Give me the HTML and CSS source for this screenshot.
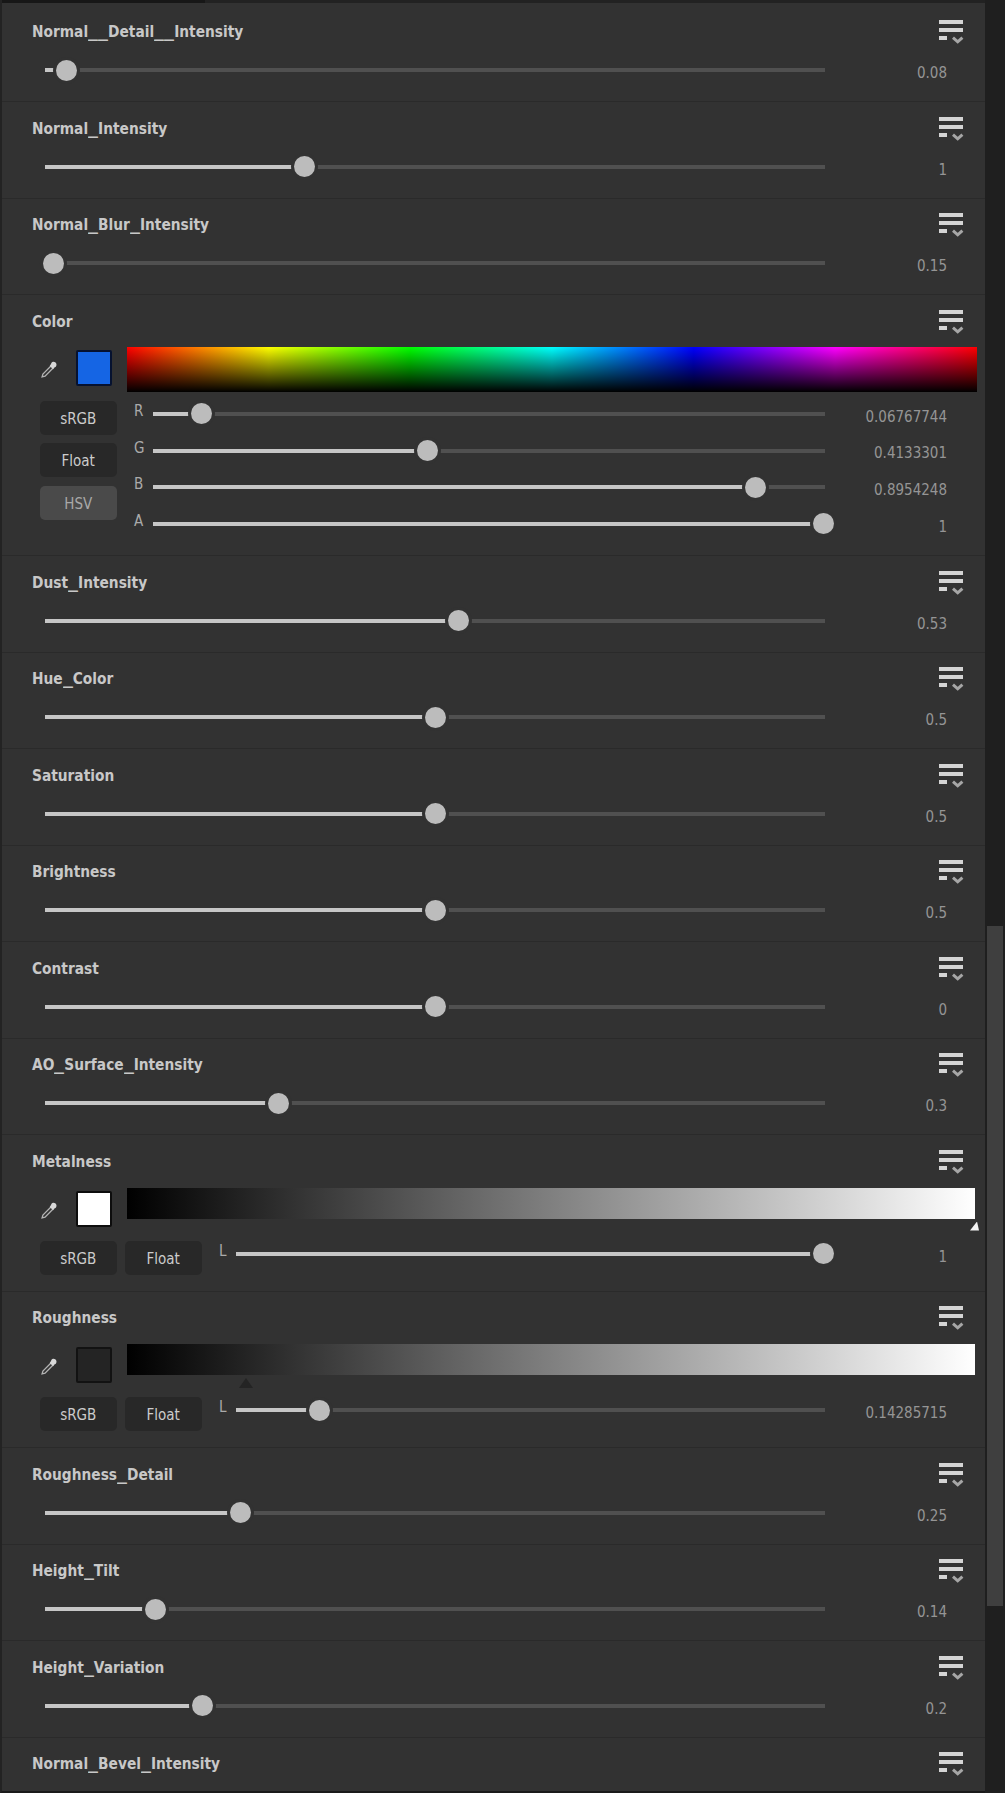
FILE: index.html
```html
<!DOCTYPE html>
<html lang="en">
<head>
<meta charset="utf-8">
<title>Material properties</title>
<link rel="stylesheet" href="styles.css">
</head>
<body>
<svg class="defs" width="0" height="0" aria-hidden="true">
  <symbol id="menu" viewBox="0 0 25 24">
    <rect x="0" y="0" width="24" height="4" fill="#d4d4d4"/>
    <rect x="0" y="8" width="24" height="4" fill="#d4d4d4"/>
    <rect x="0" y="16" width="8" height="4" fill="#d4d4d4"/>
    <path d="M14 17.6l4.7 4.2 4.7-4.2" fill="none" stroke="#a6a6a6" stroke-width="3"/>
  </symbol>
  <symbol id="dropper" viewBox="0 0 16 16">
    <path d="M9.6 4.4L1.8 12.2 1 15l2.8-.8 7.8-7.8" fill="none" stroke="#b4b4b4" stroke-width="1.2"/>
    <path d="M8.2 4.6l3.2 3.2 1-1.4 1.5-1c1.7-1.9.2-4.9-2.5-4.6-1.1.2-1.7 1-2 2.1z" fill="#d8d8d8"/>
  </symbol>
</svg>
<div class="app">
  <main class="panel">
    <div class="topbar"><div class="topbar-tab"></div></div>

    <section class="row">
      <header class="head"><h3>Normal<span class="us">_</span><span class="us">_</span>Detail<span class="us">_</span><span class="us">_</span>Intensity</h3><svg class="menu"><use href="#menu"/></svg></header>
      <div class="line simple"><div class="slider" style="--x:21.7px"><i></i><b></b></div><span class="value">0.08</span></div>
    </section>
    <section class="row">
      <header class="head"><h3>Normal<span class="us">_</span>Intensity</h3><svg class="menu"><use href="#menu"/></svg></header>
      <div class="line simple"><div class="slider" style="--x:259px"><i></i><b></b></div><span class="value">1</span></div>
    </section>
    <section class="row">
      <header class="head"><h3>Normal<span class="us">_</span>Blur<span class="us">_</span>Intensity</h3><svg class="menu"><use href="#menu"/></svg></header>
      <div class="line simple"><div class="slider" style="--x:8px"><b></b></div><span class="value">0.15</span></div>
    </section>

    <section class="row color">
      <header class="head"><h3>Color</h3><svg class="menu"><use href="#menu"/></svg></header>
      <div class="picker hue-picker">
        <svg class="dropper"><use href="#dropper"/></svg>
        <div class="swatch swatch-blue"></div>
        <div class="ramp ramp-hue"></div>
      </div>
      <div class="body">
        <div class="buttons stacked">
          <button class="btn">sRGB</button>
          <button class="btn">Float</button>
          <button class="btn active">HSV</button>
        </div>
        <div class="sliders">
          <div class="line"><label>R</label><div class="slider" style="--x:48.7px"><i></i><b></b></div><span class="value">0.06767744</span></div>
          <div class="line"><label>G</label><div class="slider" style="--x:274.6px"><i></i><b></b></div><span class="value">0.4133301</span></div>
          <div class="line"><label>B</label><div class="slider" style="--x:602px"><i></i><b></b></div><span class="value">0.8954248</span></div>
          <div class="line"><label>A</label><div class="slider" style="--x:670.3px"><i></i><b></b></div><span class="value">1</span></div>
        </div>
      </div>
    </section>

    <section class="row">
      <header class="head"><h3>Dust<span class="us">_</span>Intensity</h3><svg class="menu"><use href="#menu"/></svg></header>
      <div class="line simple"><div class="slider" style="--x:413.5px"><i></i><b></b></div><span class="value">0.53</span></div>
    </section>
    <section class="row">
      <header class="head"><h3>Hue<span class="us">_</span>Color</h3><svg class="menu"><use href="#menu"/></svg></header>
      <div class="line simple"><div class="slider" style="--x:390px"><i></i><b></b></div><span class="value">0.5</span></div>
    </section>
    <section class="row">
      <header class="head"><h3>Saturation</h3><svg class="menu"><use href="#menu"/></svg></header>
      <div class="line simple"><div class="slider" style="--x:390px"><i></i><b></b></div><span class="value">0.5</span></div>
    </section>
    <section class="row">
      <header class="head"><h3>Brightness</h3><svg class="menu"><use href="#menu"/></svg></header>
      <div class="line simple"><div class="slider" style="--x:390px"><i></i><b></b></div><span class="value">0.5</span></div>
    </section>
    <section class="row">
      <header class="head"><h3>Contrast</h3><svg class="menu"><use href="#menu"/></svg></header>
      <div class="line simple"><div class="slider" style="--x:390px"><i></i><b></b></div><span class="value">0</span></div>
    </section>
    <section class="row">
      <header class="head"><h3>AO<span class="us">_</span>Surface<span class="us">_</span>Intensity</h3><svg class="menu"><use href="#menu"/></svg></header>
      <div class="line simple"><div class="slider" style="--x:233.4px"><i></i><b></b></div><span class="value">0.3</span></div>
    </section>

    <section class="row grey">
      <header class="head"><h3>Metalness</h3><svg class="menu"><use href="#menu"/></svg></header>
      <div class="picker">
        <svg class="dropper"><use href="#dropper"/></svg>
        <div class="swatch swatch-white"></div>
        <div class="ramp ramp-grey"><span class="marker marker-white"></span></div>
      </div>
      <div class="body">
        <div class="buttons">
          <button class="btn">sRGB</button>
          <button class="btn">Float</button>
        </div>
        <div class="sliders">
          <div class="line"><label>L</label><div class="slider" style="--x:587.3px"><i></i><b></b></div><span class="value">1</span></div>
        </div>
      </div>
    </section>
    <section class="row grey">
      <header class="head"><h3>Roughness</h3><svg class="menu"><use href="#menu"/></svg></header>
      <div class="picker">
        <svg class="dropper"><use href="#dropper"/></svg>
        <div class="swatch swatch-dark"></div>
        <div class="ramp ramp-grey"><span class="marker marker-dark"></span></div>
      </div>
      <div class="body">
        <div class="buttons">
          <button class="btn">sRGB</button>
          <button class="btn">Float</button>
        </div>
        <div class="sliders">
          <div class="line"><label>L</label><div class="slider" style="--x:83.3px"><i></i><b></b></div><span class="value">0.14285715</span></div>
        </div>
      </div>
    </section>

    <section class="row">
      <header class="head"><h3>Roughness<span class="us">_</span>Detail</h3><svg class="menu"><use href="#menu"/></svg></header>
      <div class="line simple"><div class="slider" style="--x:195px"><i></i><b></b></div><span class="value">0.25</span></div>
    </section>
    <section class="row">
      <header class="head"><h3>Height<span class="us">_</span>Tilt</h3><svg class="menu"><use href="#menu"/></svg></header>
      <div class="line simple"><div class="slider" style="--x:110.5px"><i></i><b></b></div><span class="value">0.14</span></div>
    </section>
    <section class="row">
      <header class="head"><h3>Height<span class="us">_</span>Variation</h3><svg class="menu"><use href="#menu"/></svg></header>
      <div class="line simple"><div class="slider" style="--x:157px"><i></i><b></b></div><span class="value">0.2</span></div>
    </section>
    <section class="row last">
      <header class="head"><h3>Normal<span class="us">_</span>Bevel<span class="us">_</span>Intensity</h3><svg class="menu"><use href="#menu"/></svg></header>
    </section>
  </main>
  <aside class="scrollbar"><div class="scroll-thumb"></div></aside>
</div>
</body>
</html>
```

FILE: styles.css
```css
* { box-sizing: border-box; }

html, body {
  margin: 0;
  padding: 0;
  background: #1f1f1f;
}

.defs { position: absolute; }

.app {
  display: flex;
  width: 1005px;
  height: 1793px;
  overflow: hidden;
  font-family: "DejaVu Sans Condensed", "DejaVu Sans", sans-serif;
  font-stretch: condensed;
}

.panel {
  width: 985px;
  height: 1793px;
  display: flex;
  flex-direction: column;
  background: #323232;
  border-left: 2px solid #232323;
  border-bottom: 2px solid #1a1a1a;
}

.topbar {
  flex: none;
  height: 3px;
  margin-bottom: 2.5px;
  background: #222222;
}

.topbar-tab {
  width: 203px;
  height: 3px;
  background: #171717;
}

.row {
  flex: none;
  height: 96.5px;
  padding: 0 38px 0 30px;
  border-bottom: 1px solid #2a2a2a;
}

.row.color { height: 261px; }
.row.grey { height: 156.5px; }
.row.last { flex: 1; border-bottom: 0; }

.head {
  display: flex;
  justify-content: space-between;
  align-items: flex-start;
  height: 38.5px;
  padding-top: 14.5px;
  margin-right: -17px;
}

.head h3 {
  margin: 0;
  font-size: 15.3px;
  line-height: 24px;
  font-weight: 700;
  color: #c8c8c8;
}

.us {
  display: inline-block;
  width: 10px;
  transform: scaleX(1.45);
  transform-origin: left center;
}

.menu {
  width: 25px;
  height: 24px;
  flex: none;
}

.line {
  display: flex;
  align-items: center;
  height: 36.6px;
}

.line.simple {
  margin: 8.1px 0 0 13px;
}

.line label {
  flex: none;
  width: 19px;
  padding-bottom: 6px;
  font-size: 15px;
  color: #aaaaaa;
}

.grey .line label { width: 17px; }

.slider {
  position: relative;
  flex: 1;
  height: 4px;
  background: #505050;
}

.slider i {
  position: absolute;
  left: 0;
  top: 0;
  width: var(--x);
  height: 4px;
  background: #c6c6c6;
}

.slider b {
  position: absolute;
  left: calc(var(--x) - 10.5px);
  top: -8.5px;
  width: 21px;
  height: 21px;
  border-radius: 50%;
  background: #bcbcbc;
  box-shadow: 0 0 0 3px #323232;
}

.value {
  flex: none;
  width: 122px;
  padding-top: 5.5px;
  text-align: right;
  font-size: 15px;
  color: #959595;
}

.picker {
  display: flex;
  align-items: flex-start;
  height: 39px;
  margin: 14px -28px 0 8px;
}

.hue-picker {
  height: 45px;
  margin: 13.5px -30px 0 8px;
}

.dropper {
  flex: none;
  width: 17px;
  height: 17px;
  margin: 14px 18px 0 1px;
}

.swatch {
  flex: none;
  width: 36px;
  height: 36px;
  margin: 3px 15px 0 0;
  border: 2px solid #0d0d0d;
  border-radius: 2px;
}

.swatch-blue { background: #1565e4; border-color: #061230; }
.swatch-white { background: #ffffff; }
.swatch-dark { background: #242424; border-color: #121212; }

.ramp {
  position: relative;
  flex: 1;
}

.ramp-hue {
  height: 45px;
  background:
    linear-gradient(to bottom, rgba(0, 0, 0, 0), #000000),
    linear-gradient(to right, #ff0000, #ffff00, #00ff00, #00ffff, #0000ff, #ff00ff, #ff0000);
}

.ramp-grey {
  height: 31px;
  background: linear-gradient(to right, #000000, #ffffff);
}

.marker {
  position: absolute;
  display: block;
}

.marker-white {
  left: 843px;
  top: 34px;
  width: 9px;
  height: 9px;
  background: #f4f4f4;
  clip-path: polygon(0 100%, 78% 0, 100% 100%);
}

.marker-dark {
  left: 112px;
  top: 34px;
  width: 14px;
  height: 10px;
  background: #242424;
  clip-path: polygon(50% 0, 100% 100%, 0 100%);
}

.body {
  display: flex;
  gap: 17.5px;
  margin-left: 8px;
  margin-top: 9.2px;
}

.color .body { margin-top: 3.7px; }

.buttons {
  display: flex;
  flex: none;
  gap: 8.5px;
  padding-top: 5.3px;
}

.buttons.stacked { flex-direction: column; }

.btn {
  width: 76.5px;
  height: 34px;
  padding: 2px 0 0;
  border: 0;
  border-radius: 5px;
  background: #282828;
  color: #cccccc;
  font: inherit;
  font-size: 15px;
}

.btn.active {
  background: #4a4a4a;
  color: #a8a8a8;
}

.sliders {
  flex: 1;
  min-width: 0;
}

.scrollbar {
  flex: none;
  width: 20px;
  height: 1793px;
  padding: 926px 2px 0 2px;
  background: #1f1f1f;
}

.scroll-thumb {
  width: 16px;
  height: 680px;
  background: #3f3f3f;
}
```
